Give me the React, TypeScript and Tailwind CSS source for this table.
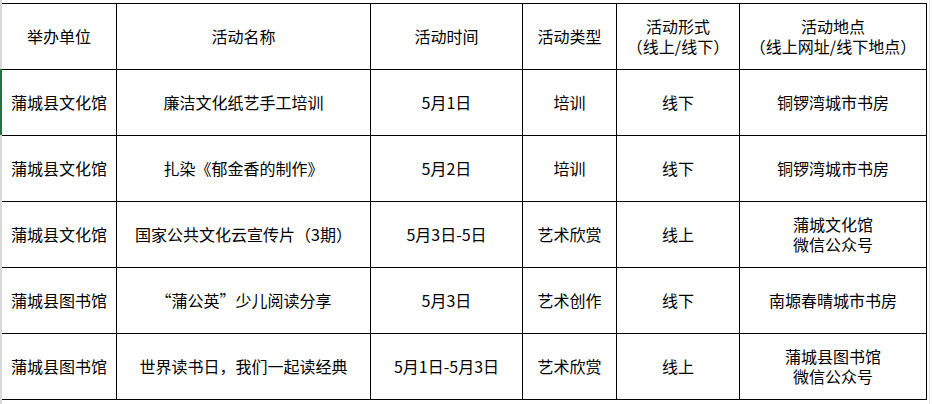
import React from 'react';

const widths = ['w-[115px]', 'w-[254px]', 'w-[152px]', 'w-[94px]', 'w-[123px]', 'w-[187px]'];

const header: string[][] = [
  ['举办单位'],
  ['活动名称'],
  ['活动时间'],
  ['活动类型'],
  ['活动形式', '（线上/线下）'],
  ['活动地点', '（线上网址/线下地点）'],
];

const rows: string[][][] = [
  [['蒲城县文化馆'], ['廉洁文化纸艺手工培训'], ['5月1日'], ['培训'], ['线下'], ['铜锣湾城市书房']],
  [['蒲城县文化馆'], ['扎染《郁金香的制作》'], ['5月2日'], ['培训'], ['线下'], ['铜锣湾城市书房']],
  [['蒲城县文化馆'], ['国家公共文化云宣传片（3期）'], ['5月3日-5日'], ['艺术欣赏'], ['线上'], ['蒲城文化馆', '微信公众号']],
  [['蒲城县图书馆'], ['“蒲公英”少儿阅读分享'], ['5月3日'], ['艺术创作'], ['线下'], ['南塬春晴城市书房']],
  [['蒲城县图书馆'], ['世界读书日，我们一起读经典'], ['5月1日-5月3日'], ['艺术欣赏'], ['线上'], ['蒲城县图书馆', '微信公众号']],
];

function Row({ cells }: { cells: string[][] }) {
  return (
    <div className="flex h-[66px] border-b border-black">
      {cells.map((lines, i) => (
        <div
          key={i}
          className={`${widths[i]} shrink-0 border-r border-black flex flex-col items-center justify-center gap-px text-center leading-[19px]`}
        >
          {lines.map((l, j) => (
            <span key={j} className="block">{l}</span>
          ))}
        </div>
      ))}
    </div>
  );
}

export default function App() {
  return (
    <div
      className="w-[932px] h-[404px] bg-white flex text-[16px] text-black overflow-hidden"
      style={{ fontFamily: '"SimSun", "Noto Sans CJK SC", sans-serif' }}
    >
      {/* left edge strip */}
      <div className="w-[2px] flex flex-col shrink-0">
        <div className="h-[69px] bg-[#d9d9d9]" />
        <div className="h-[66px] bg-[#217346]" />
        <div className="flex-1 bg-[#d9d9d9]" />
      </div>

      <div className="pt-[3px]">
        <div className="border-t border-black">
          <Row cells={header} />
          {rows.map((r, i) => (
            <Row key={i} cells={r} />
          ))}
        </div>
      </div>

      <div className="flex-1 flex pl-[2px]">
        <div className="w-px bg-[#e4e4e4]" />
      </div>
    </div>
  );
}
